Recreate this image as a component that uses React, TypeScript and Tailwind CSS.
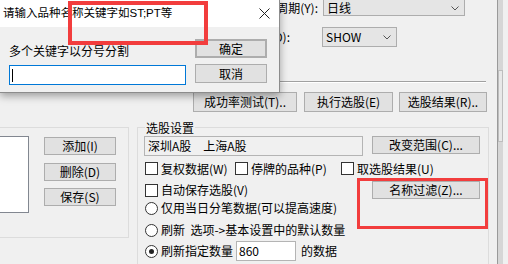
import React from "react";

// Windows-style pieces
function Btn({ label, className = "" }: { label: string; className?: string }) {
    return (
        <div
            className={`flex items-center justify-center shrink-0 bg-[#e1e1e1] border border-[#adadad] text-[12px] leading-none whitespace-nowrap ${className}`}
        >
            {label}
        </div>
    );
}

function Combo({ text, className = "" }: { text: string; className?: string }) {
    return (
        <div className={`flex items-center justify-between shrink-0 bg-[#e5e5e5] border border-[#adadad] pl-[3px] pr-[5px] ${className}`}>
            <span>{text}</span>
            <svg width="8" height="5" viewBox="0 0 8 5" className="shrink-0">
                <path d="M0.5 0.5 L4 4 L7.5 0.5" fill="none" stroke="#555" strokeWidth="1" />
            </svg>
        </div>
    );
}

function Check({ label, className = "" }: { label: string; className?: string }) {
    return (
        <div className={`flex items-center gap-[3px] shrink-0 ${className}`}>
            <div className="w-[13px] h-[13px] border border-[#333] bg-white shrink-0" />
            <span className="whitespace-nowrap">{label}</span>
        </div>
    );
}

function Radio({ checked = false }: { checked?: boolean }) {
    return (
        <div className="w-[13px] h-[13px] rounded-full border border-[#333] bg-white flex items-center justify-center shrink-0">
            {checked && <div className="w-[5px] h-[5px] rounded-full bg-[#222]" />}
        </div>
    );
}

export default function App() {
    return (
        <div className="relative w-[508px] h-[264px] overflow-hidden bg-[#f0f0f0] text-black text-[12px] font-['Noto_Sans_CJK_SC',sans-serif] flex items-start">
            {/* main window */}
            <div className="w-[497px] flex flex-col shrink-0">
                <div className="flex items-center shrink-0 h-[20px] -mt-[4px]">
                    <div className="w-[318px] pt-[4px] text-right whitespace-nowrap">周期(Y):</div>
                    <Combo text="日线" className="ml-[5px] w-[142px] h-[20px] pt-[4px]" />
                </div>
                <div className="flex items-center shrink-0 h-[20px] mt-[11px]">
                    <div className="w-[290px] text-right whitespace-nowrap">方式(O):</div>
                    <Combo text="SHOW" className="ml-[32px] w-[75px] h-[20px]" />
                </div>
                <div className="shrink-0 mt-[34px] w-[486px] border-t border-[#a0a0a0] border-b border-b-white" />

                <div className="flex shrink-0 mt-[9px] pl-[193px] h-[20px]">
                    <Btn label="成功率测试(T).." className="w-[104px]" />
                    <Btn label="执行选股(E)" className="w-[89px] ml-[7px]" />
                    <Btn label="选股结果(R).." className="w-[88px] ml-[6px]" />
                </div>

                <div className="flex items-start shrink-0 mt-[15px]">
                    {/* left group */}
                    <div className="w-[129px] h-[111px] shrink-0 border border-l-0 border-[#dcdcdc] flex items-start">
                        <div className="w-[29px] h-[77px] mt-[8px] bg-white border border-l-0 border-[#828790]" />
                        <div className="flex flex-col ml-[15px] mt-[9px]">
                            <Btn label="添加(I)" className="w-[72px] h-[18px]" />
                            <Btn label="删除(D)" className="w-[72px] h-[18px] mt-[8px]" />
                            <Btn label="保存(S)" className="w-[72px] h-[18px] mt-[7px]" />
                        </div>
                    </div>

                    {/* right group */}
                    <div className="ml-[8px] w-[352px] h-[150px] shrink-0 border border-[#dcdcdc] flex flex-col pl-[6px]">
                        <span className="block shrink-0 w-fit ml-[1px] -mt-[8px] h-[16px] leading-[16px] px-[1px] bg-[#f0f0f0]">选股设置</span>
                        <div className="flex items-start shrink-0 w-[336px]">
                            <div className="w-[219px] h-[20px] border border-[#b4b4b4] flex items-center pl-[3px] whitespace-nowrap">
                                深圳A股　上海A股
                            </div>
                            <Btn label="改变范围(C)..." className="ml-[9px] w-[108px] h-[18px]" />
                        </div>
                        <div className="flex items-center shrink-0 h-[13px] mt-[6px] ml-[1px]">
                            <Check label="复权数据(W)" className="w-[90px]" />
                            <Check label="停牌的品种(P)" className="w-[106px]" />
                            <Check label="取选股结果(U)" />
                        </div>
                        <div className="flex items-center shrink-0 h-[18px] mt-[6px] w-[336px]">
                            <Check label="自动保存选股(V)" className="ml-[1px]" />
                            <Btn label="名称过滤(Z)..." className="ml-auto w-[108px] h-[18px]" />
                        </div>
                        <div className="flex items-center shrink-0 gap-[3px] h-[18px] ml-[1px]">
                            <Radio />
                            <span className="whitespace-nowrap">仅用当日分笔数据(可以提高速度)</span>
                        </div>
                        <div className="flex items-center shrink-0 gap-[3px] h-[18px] mt-[4px] ml-[1px]">
                            <Radio />
                            <span className="whitespace-nowrap">刷新&nbsp;&nbsp;选项-&gt;基本设置中的默认数量</span>
                        </div>
                        <div className="flex items-center shrink-0 h-[20px] mt-[2px] ml-[1px]">
                            <Radio checked />
                            <span className="ml-[3px] whitespace-nowrap">刷新指定数量</span>
                            <div className="ml-[3px] w-[60px] h-[20px] bg-white border border-[#b4b4b4] flex items-center pl-[2px]">860</div>
                            <span className="ml-[5px] whitespace-nowrap">的数据</span>
                        </div>
                    </div>
                </div>
            </div>

            {/* right edge / scrollbar */}
            <div className="w-[11px] h-[264px] flex border-l border-[#9a9a9a]">
                <div className="w-[5px] bg-[#d6d6d6] flex flex-col">
                    <div className="mt-[70px] h-[72px] border border-[#bdbdbd] bg-[#e8e8e8]" />
                </div>
                <div className="flex-1 bg-[#f0f0f0]" />
            </div>

            {/* dialog on top */}
            <div className="absolute left-0 top-0 w-[280px] h-[93px] flex flex-col bg-[#f0f0f0] border-r border-b border-[#8c8c8c] shadow-[0_3px_8px_rgba(0,0,0,0.35)]">
                <div className="h-[27px] shrink-0 bg-white flex items-center justify-between pl-[3px] pr-[9px]">
                    <span className="whitespace-nowrap text-[11.5px] font-['Liberation_Sans','Noto_Sans_CJK_SC',sans-serif]">
                        请输入品种名称关键字如ST;PT等
                    </span>
                    <svg width="11" height="11" viewBox="0 0 11 11">
                        <path d="M0.5 0.5 L10.5 10.5 M10.5 0.5 L0.5 10.5" stroke="#222" strokeWidth="1" fill="none" />
                    </svg>
                </div>
                <div className="flex pl-[9px]">
                    <div className="flex flex-col">
                        <div className="mt-[16px] h-[16px] leading-[16px]">多个关键字以分号分割</div>
                        <div className="mt-[6px] w-[177px] h-[20px] bg-white border border-[#0078d7] flex items-center pl-[2px]">
                            <div className="w-[1px] h-[13px] bg-black" />
                        </div>
                    </div>
                    <div className="flex flex-col ml-[9px] mt-[12px]">
                        <Btn label="确定" className="w-[72px] h-[19px] border-2 border-[#0078d7]" />
                        <Btn label="取消" className="w-[72px] h-[19px] mt-[6px]" />
                    </div>
                </div>
            </div>

            {/* red annotation boxes */}
            <div className="absolute left-[68px] top-[1px] w-[140px] h-[44px] border-4 border-[#f23d3d]" />
            <div className="absolute left-[357px] top-[178px] w-[131px] h-[51px] border-[3px] border-[#f23d3d]" />
        </div>
    );
}
